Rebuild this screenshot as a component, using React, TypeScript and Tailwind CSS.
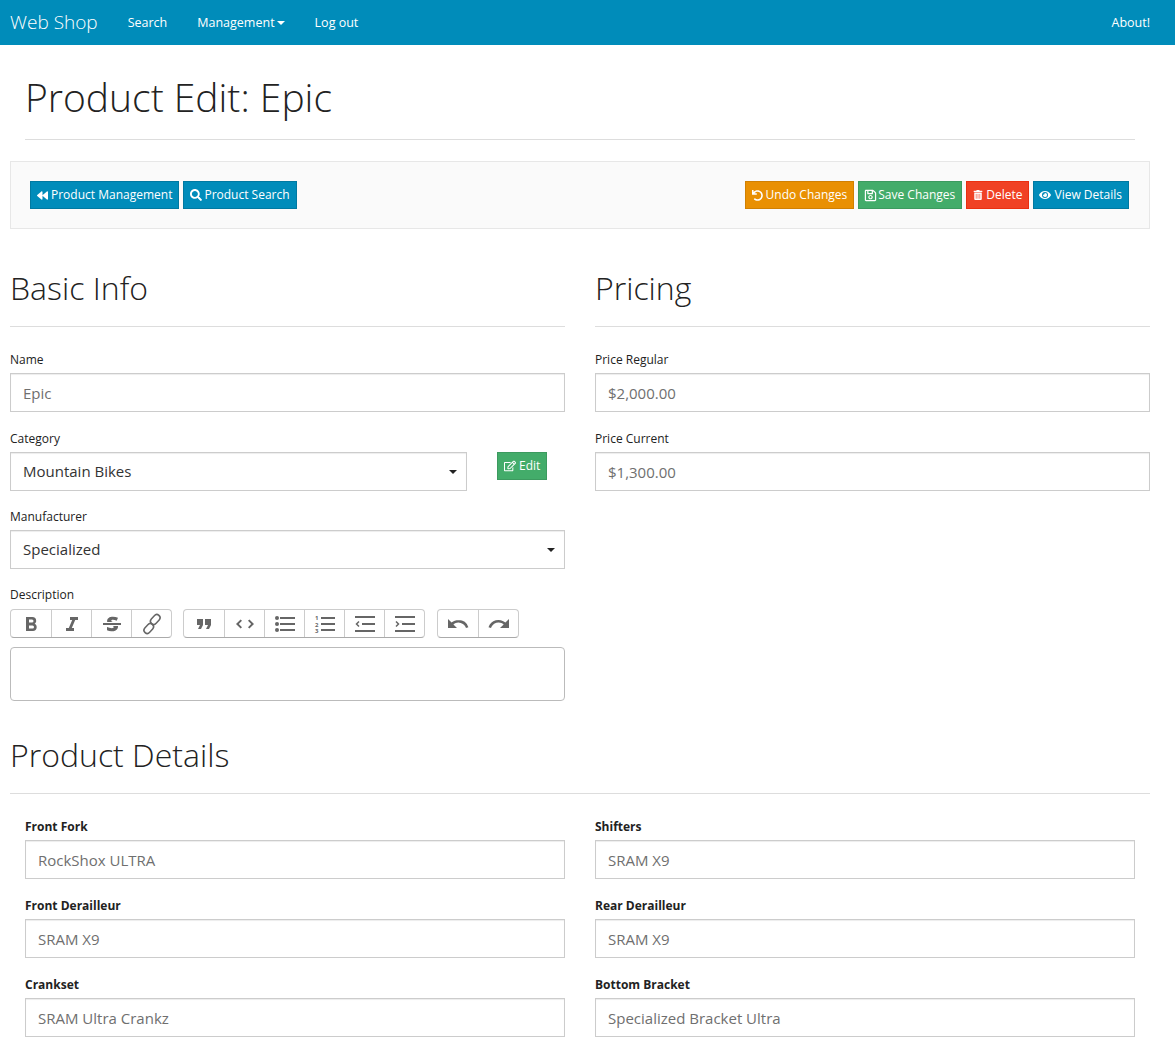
import React from 'react';
import { FaBackward, FaSearch, FaUndo, FaRegSave, FaTrashAlt, FaEye, FaRegEdit } from 'react-icons/fa';

const fieldClass = 'block w-full h-[39px] px-[12px] border border-[#ccc] bg-white text-[15px] text-[#6f6f6f] shadow-[inset_0_1px_1px_rgba(0,0,0,0.075)] outline-none';
const labelClass = 'block h-[14px] mb-[6px] text-[12px] leading-[14px] text-[#222]';

function Btn({ icon, label, color }: { icon: React.ReactNode; label: string; color: string }) {
  return (
    <button className={`inline-flex items-center gap-[3px] h-[28px] px-[6px] border text-[12px] text-white whitespace-nowrap ${color}`}>
      {icon}
      <span>{label}</span>
    </button>
  );
}

const blue = 'bg-[#008cba] border-[#0079a1]';
const green = 'bg-[#43ac6a] border-[#3c9a5f]';
const orange = 'bg-[#e99002] border-[#d08002]';
const red = 'bg-[#f04124] border-[#ea2f10]';

function TextField({ label, value, bold }: { label: string; value: string; bold?: boolean }) {
  return (
    <div>
      <label className={`${labelClass} ${bold ? 'font-bold' : ''}`}>{label}</label>
      <input className={fieldClass} defaultValue={value} readOnly />
    </div>
  );
}

function SelectField({ value }: { value: string }) {
  return (
    <div className="relative">
      <select className={`${fieldClass} appearance-none !text-[#333]`} defaultValue={value}>
        <option>{value}</option>
      </select>
      <span className="absolute right-[10px] top-[18px] w-0 h-0 border-x-[4px] border-x-transparent border-t-[4px] border-t-[#222]" />
    </div>
  );
}

// editor toolbar icons, 24px box
function Icon({ children }: { children: React.ReactNode }) {
  return (
    <svg width="24" height="24" viewBox="0 0 24 24" fill="#666">
      {children}
    </svg>
  );
}

const Lines = ({ from }: { from: number }) => (
  <path d={`M${from} 6H22M${from} 12H22M${from} 18H22`} stroke="#666" strokeWidth="2" fill="none" />
);

const icons = {
  bold: <Icon><path d="M15.6 11.8c1-.7 1.6-1.8 1.6-2.8a4 4 0 0 0-4-4H7v14h7c2.1 0 3.7-1.7 3.7-3.8 0-1.5-.8-2.8-2.1-3.4zM10 7.5h3a1.5 1.5 0 1 1 0 3h-3v-3zm3.5 9H10v-3h3.5a1.5 1.5 0 1 1 0 3z" /></Icon>,
  italic: <Icon><path d="M10 5v3h2.2l-3.4 8H6v3h8v-3h-2.2l3.4-8H18V5h-8z" /></Icon>,
  strike: <Icon><path d="M12.73 14l.28.14c.26.15.45.3.57.44.12.14.18.3.18.5 0 .3-.15.56-.44.75-.3.2-.76.3-1.39.3A13.52 13.52 0 0 1 7 14.95v3.37a10.64 10.64 0 0 0 4.84.88c1.26 0 2.35-.19 3.28-.56.93-.37 1.64-.9 2.14-1.57s.74-1.45.74-2.32c0-.26-.02-.51-.06-.75h-5.21zm-5.5-4c-.08-.34-.12-.7-.12-1.1 0-1.29.52-2.3 1.58-3.02 1.05-.72 2.5-1.08 4.34-1.08 1.62 0 3.28.34 4.97 1l-1.3 2.93c-1.47-.6-2.73-.9-3.8-.9-.55 0-.96.08-1.2.26-.26.17-.38.38-.38.64 0 .27.16.52.48.74.17.12.53.3 1.05.53H7.23zM3 13h18v-2H3v2z" /></Icon>,
  link: (
    <Icon>
      <g fill="none" stroke="#666" strokeWidth="1.5">
        <rect x="12" y="2" width="6.5" height="11" rx="3.25" transform="rotate(42 15.25 7.5)" />
        <rect x="5.5" y="11" width="6.5" height="11" rx="3.25" transform="rotate(42 8.75 16.5)" />
      </g>
    </Icon>
  ),
  quote: <Icon><path d="M6 17h3l2-4V7H5v6h3zm8 0h3l2-4V7h-6v6h3z" /></Icon>,
  code: <Icon><path d="M18.2 12L15 15.2l1.4 1.4L21 12l-4.6-4.6L15 8.8l3.2 3.2zM5.8 12L9 8.8 7.6 7.4 3 12l4.6 4.6L9 15.2 5.8 12z" /></Icon>,
  bullets: (
    <Icon>
      <circle cx="4" cy="6" r="2" />
      <circle cx="4" cy="12" r="2" />
      <circle cx="4" cy="18" r="2" />
      <Lines from={7} />
    </Icon>
  ),
  numbers: (
    <Icon>
      <text x="2" y="8" fontSize="6" fontWeight="700">1</text>
      <text x="2" y="14.5" fontSize="6" fontWeight="700">2</text>
      <text x="2" y="21" fontSize="6" fontWeight="700">3</text>
      <Lines from={8} />
    </Icon>
  ),
  outdent: (
    <Icon>
      <path d="M2 5H22M9 12H22M2 19H22" stroke="#666" strokeWidth="2" fill="none" />
      <path d="M6 9.5L3.5 12L6 14.5" stroke="#666" strokeWidth="1.5" fill="none" />
    </Icon>
  ),
  indent: (
    <Icon>
      <path d="M2 5H22M9 12H22M2 19H22" stroke="#666" strokeWidth="2" fill="none" />
      <path d="M3 9.5L5.5 12L3 14.5" stroke="#666" strokeWidth="1.5" fill="none" />
    </Icon>
  ),
  undo: <Icon><path d="M12.5 8c-2.6 0-5 1-6.9 2.6L2 7v9h9l-3.6-3.6A8 8 0 0 1 20 16l2.4-.8a10.5 10.5 0 0 0-10-7.2z" /></Icon>,
  redo: <Icon><path d="M18.4 10.6a10.5 10.5 0 0 0-16.9 4.6L4 16a8 8 0 0 1 12.7-3.6L13 16h9V7l-3.6 3.6z" /></Icon>,
};

function ToolGroup({ items }: { items: React.ReactNode[] }) {
  return (
    <div className="flex h-[29px] border border-[#ccc] border-b-[#aaa] rounded-[4px] bg-white overflow-hidden">
      {items.map((item, i) => (
        <div key={i} className={`flex items-center justify-center w-[40px] ${i > 0 ? 'border-l border-[#ccc]' : ''}`}>
          {item}
        </div>
      ))}
    </div>
  );
}

function Heading({ children }: { children: React.ReactNode }) {
  return (
    <div className="h-[60px] border-b border-[#ddd]">
      <h2 className="text-[32px] leading-[42px] font-light text-[#222]">{children}</h2>
    </div>
  );
}

const details = [
  ['Front Fork', 'RockShox ULTRA'],
  ['Shifters', 'SRAM X9'],
  ['Front Derailleur', 'SRAM X9'],
  ['Rear Derailleur', 'SRAM X9'],
  ['Crankset', 'SRAM Ultra Crankz'],
  ['Bottom Bracket', 'Specialized Bracket Ultra'],
];

export default function App() {
  return (
    <div className="min-h-screen bg-white text-[#222]" style={{ fontFamily: '"Open Sans", sans-serif' }}>
      {/* Navbar */}
      <nav className="flex items-center h-[45px] pl-[10px] pr-[25px] pt-[1px] bg-[#008cba] text-white text-[12.5px]">
        <span className="text-[19px] font-light mr-[30px] -mt-[1px]">Web Shop</span>
        <span className="mr-[30px]">Search</span>
        <span className="flex items-center mr-[30px]">
          Management
          <span className="ml-[2px] w-0 h-0 border-x-[4px] border-x-transparent border-t-[4px] border-t-white" />
        </span>
        <span>Log out</span>
        <span className="ml-auto">About!</span>
      </nav>

      <div className="pl-[10px] pr-[25px]">
        {/* Page header */}
        <div className="mx-[15px] h-[95px] border-b border-[#ddd]">
          <h1 className="pt-[23px] text-[39px] leading-[58px] font-light text-[#222]">Product Edit: Epic</h1>
        </div>

        {/* Action bar */}
        <div className="flex justify-between mt-[21px] h-[68px] pl-[19px] pr-[20px] pt-[19px] bg-[#fafafa] border border-[#e7e7e7]">
          <div className="flex gap-[4px]">
            <Btn color={blue} icon={<FaBackward size={11} />} label="Product Management" />
            <Btn color={blue} icon={<FaSearch size={12} className="-mr-[1px]" />} label="Product Search" />
          </div>
          <div className="flex gap-[4px]">
            <Btn color={orange} icon={<FaUndo size={11} />} label="Undo Changes" />
            <Btn color={green} icon={<FaRegSave size={13} className="-ml-[1px] -mr-[2px]" />} label="Save Changes" />
            <Btn color={red} icon={<FaTrashAlt size={10} />} label="Delete" />
            <Btn color={blue} icon={<FaEye size={12} className="-ml-[1px]" />} label="View Details" />
          </div>
        </div>

        <div className="grid grid-cols-2 gap-x-[30px] mt-[38px]">
          {/* Basic info */}
          <div>
            <Heading>Basic Info</Heading>
            <div className="mt-[26px] flex flex-col gap-[20px]">
              <TextField label="Name" value="Epic" />
              <div>
                <label className={labelClass}>Category</label>
                <div className="flex items-start">
                  <div className="w-[457px]"><SelectField value="Mountain Bikes" /></div>
                  <div className="ml-[30px]">
                    <Btn color={green} icon={<FaRegEdit size={12} />} label="Edit" />
                  </div>
                </div>
              </div>
              <div className="-mt-[1px]">
                <label className={labelClass}>Manufacturer</label>
                <SelectField value="Specialized" />
              </div>
              <div className="-mt-[1px]">
                <label className="block h-[14px] mb-[7px] text-[12px] leading-[14px]">Description</label>
                <div className="flex gap-[11px]">
                  <ToolGroup items={[icons.bold, icons.italic, icons.strike, icons.link]} />
                  <ToolGroup items={[icons.quote, icons.code, icons.bullets, icons.numbers, icons.outdent, icons.indent]} />
                  <div className="ml-[1px]">
                    <ToolGroup items={[icons.undo, icons.redo]} />
                  </div>
                </div>
                <div className="mt-[9px] h-[54px] border border-[#bbb] rounded-[4px]" />
              </div>
            </div>
          </div>

          {/* Pricing */}
          <div>
            <Heading>Pricing</Heading>
            <div className="mt-[26px] flex flex-col gap-[20px]">
              <TextField label="Price Regular" value="$2,000.00" />
              <TextField label="Price Current" value="$1,300.00" />
            </div>
          </div>
        </div>

        {/* Product details */}
        <div className="mt-[33px]">
          <Heading>Product Details</Heading>
          <div className="grid grid-cols-2 gap-x-[30px] gap-y-[20px] mt-[26px] px-[15px]">
            {details.map(([label, value]) => (
              <TextField key={label} label={label} value={value} bold />
            ))}
          </div>
        </div>
      </div>
    </div>
  );
}
